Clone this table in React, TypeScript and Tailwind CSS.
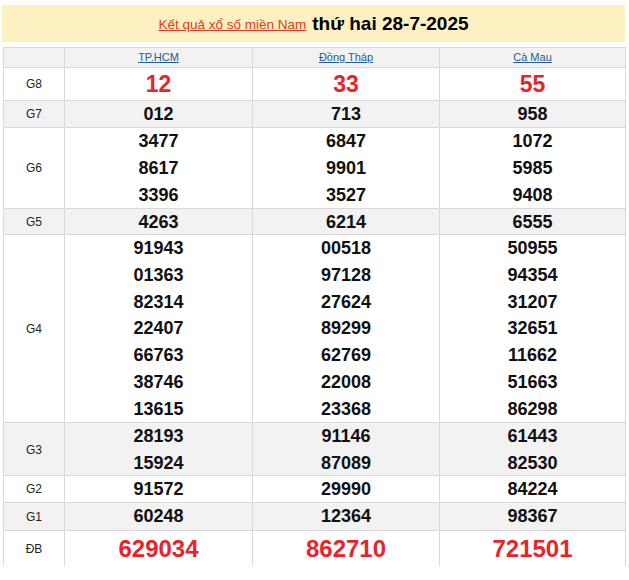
import React from "react";

type Row = { label: string; h: string; bg: string; vals: string[][]; red?: boolean; big?: boolean };

const rows: Row[] = [
  { label: "G8", h: "h-[33px]", bg: "bg-white", vals: [["12"], ["33"], ["55"]], red: true },
  { label: "G7", h: "h-[27px]", bg: "bg-[#f2f2f2]", vals: [["012"], ["713"], ["958"]] },
  { label: "G6", h: "h-[81px]", bg: "bg-white", vals: [["3477", "8617", "3396"], ["6847", "9901", "3527"], ["1072", "5985", "9408"]] },
  { label: "G5", h: "h-[26px]", bg: "bg-[#f2f2f2]", vals: [["4263"], ["6214"], ["6555"]] },
  {
    label: "G4",
    h: "h-[188px]",
    bg: "bg-white",
    vals: [
      ["91943", "01363", "82314", "22407", "66763", "38746", "13615"],
      ["00518", "97128", "27624", "89299", "62769", "22008", "23368"],
      ["50955", "94354", "31207", "32651", "11662", "51663", "86298"],
    ],
  },
  { label: "G3", h: "h-[53px]", bg: "bg-[#f2f2f2]", vals: [["28193", "15924"], ["91146", "87089"], ["61443", "82530"]] },
  { label: "G2", h: "h-[27px]", bg: "bg-white", vals: [["91572"], ["29990"], ["84224"]] },
  { label: "G1", h: "h-[28px]", bg: "bg-[#f2f2f2]", vals: [["60248"], ["12364"], ["98367"]] },
  { label: "ĐB", h: "h-[35px]", bg: "bg-white", vals: [["629034"], ["862710"], ["721501"]], red: true, big: true },
];

export default function App() {
  return (
    <div className="w-[629px] h-[580px] bg-white overflow-hidden" style={{ fontFamily: '"Liberation Sans", Arial, sans-serif' }}>
      <div className="pt-[5px] px-[2px]">
        <div className="h-[37px] w-[623px] bg-[#fef1c1] flex items-center justify-center gap-[6px]">
          <a className="text-[13.5px] text-[#e23a1e] underline leading-none mt-[2px]">Kết quả xổ số miền Nam</a>
          <span className="text-[19px] font-bold text-black leading-none">thứ hai 28-7-2025</span>
        </div>
      </div>
      <div className="mt-[5px] ml-[3px] w-[623px] border-l border-t border-[#d9d9d9]">
        <div className="grid grid-cols-[61px_188px_187px_186px] h-[20px] bg-[#f2f2f2] border-b border-[#d9d9d9]">
          <div className="border-r border-[#d9d9d9]" />
          {["TP.HCM", "Đồng Tháp", "Cà Mau"].map((p) => (
            <div key={p} className="border-r border-[#d9d9d9] flex items-center justify-center">
              <a className="text-[11px] text-[#1f5b98] underline leading-none">{p}</a>
            </div>
          ))}
        </div>
        {rows.map((r, i) => (
          <div
            key={r.label}
            className={`grid grid-cols-[61px_188px_187px_186px] ${r.h} ${r.bg} ${i === rows.length - 1 ? "" : "border-b border-[#d9d9d9]"}`}
          >
            <div className="border-r border-[#d9d9d9] flex items-center justify-center text-[12px] text-[#222]">{r.label}</div>
            {r.vals.map((col, j) => (
              <div key={j} className="border-r border-[#d9d9d9] flex flex-col items-center justify-center">
                {col.map((v) => (
                  <span
                    key={v}
                    className={
                      r.red
                        ? r.big
                          ? "text-[24px] font-bold text-[#e4252b] leading-[30px]"
                          : "text-[23px] font-bold text-[#e4252b] leading-[30px]"
                        : "text-[18px] font-bold text-[#111] leading-[26.8px]"
                    }
                  >
                    {v}
                  </span>
                ))}
              </div>
            ))}
          </div>
        ))}
      </div>
    </div>
  );
}
